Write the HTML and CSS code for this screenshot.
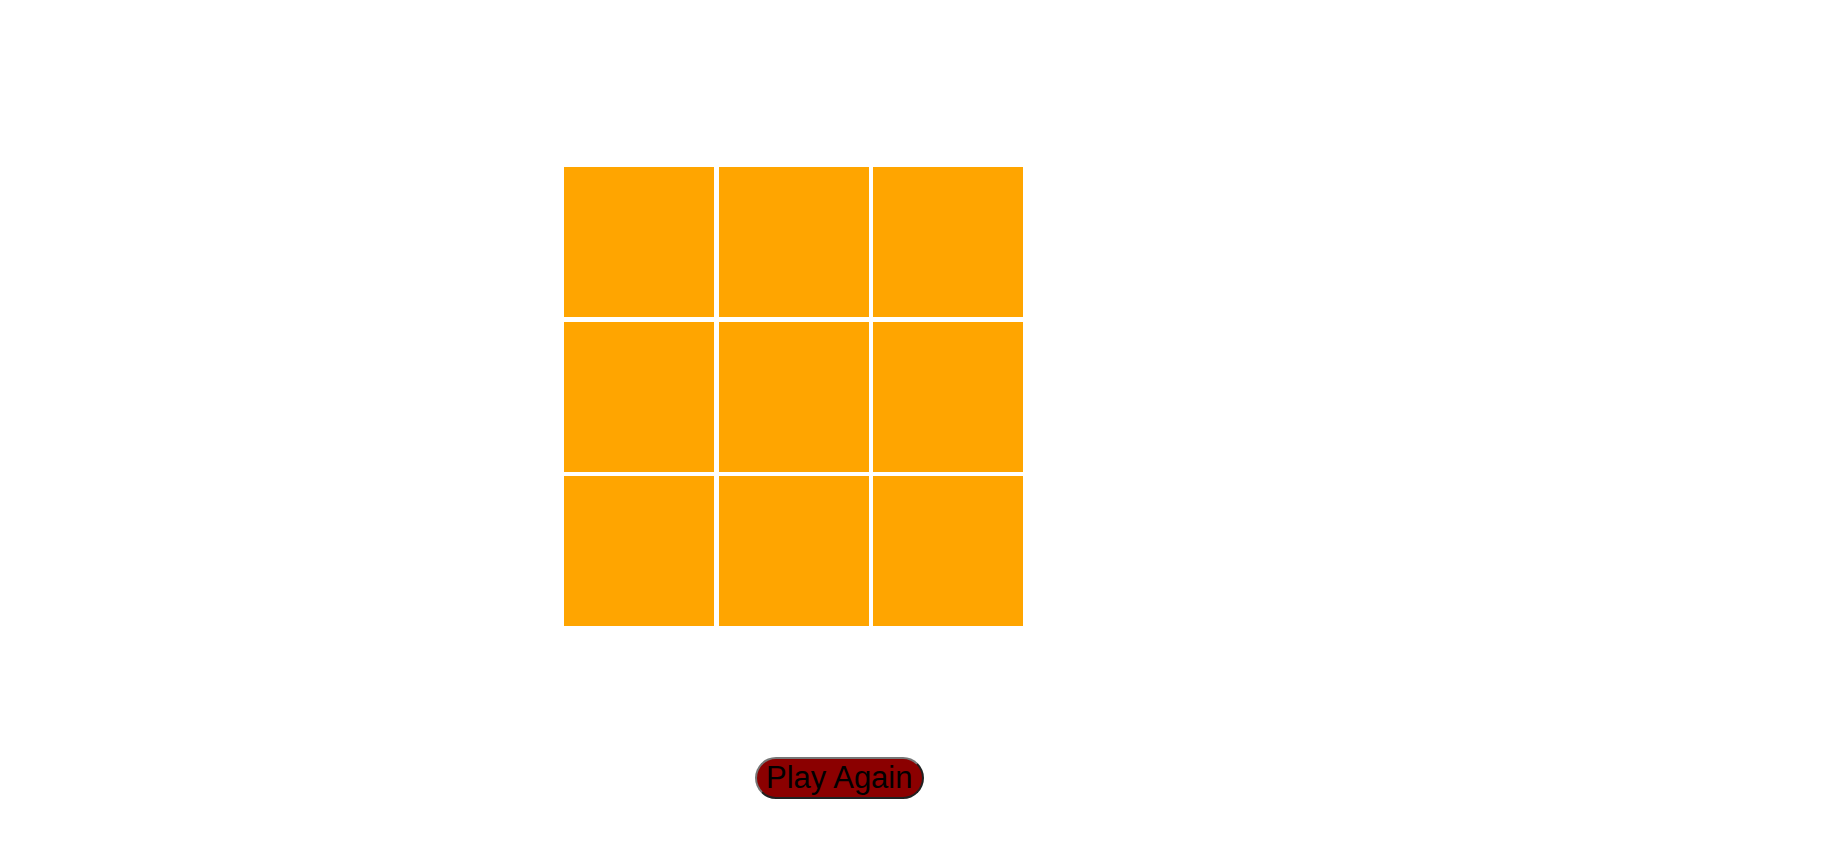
FILE: index.html
```html
<!DOCTYPE html>
<html>
<head>
<meta charset="utf-8">
<link rel="stylesheet" href="styles.css">
</head>
<body>
<main class="page">
  <div class="board">
    <div class="cell"></div><div class="cell"></div><div class="cell"></div>
    <div class="cell"></div><div class="cell"></div><div class="cell"></div>
    <div class="cell"></div><div class="cell"></div><div class="cell"></div>
  </div>
  <div class="actions">
    <button class="again">Play Again</button>
  </div>
</main>
</body>
</html>
```
FILE: styles.css
```css
html, body {
  margin: 0;
  padding: 0;
  background: #ffffff;
}
.page {
  display: flex;
  flex-direction: column;
  align-items: flex-start;
  padding: 167px 0 0 564px;
}
.board {
  display: grid;
  grid-template-columns: 150px 150px 150px;
  grid-template-rows: 150px 150px 150px;
  gap: 4.5px;
}
.cell {
  background: #ffa500;
}
.actions {
  margin-top: 131px;
  padding-left: 191px;
}
.again {
  font-family: "Liberation Sans", Arial, sans-serif;
  font-size: 31px;
  line-height: 34px;
  color: #000;
  background: #8b0000;
  border: 2px outset #767676;
  border-radius: 22px;
  padding: 2px 9px 2px 9px;
  margin: 0;
  cursor: pointer;
}
```
